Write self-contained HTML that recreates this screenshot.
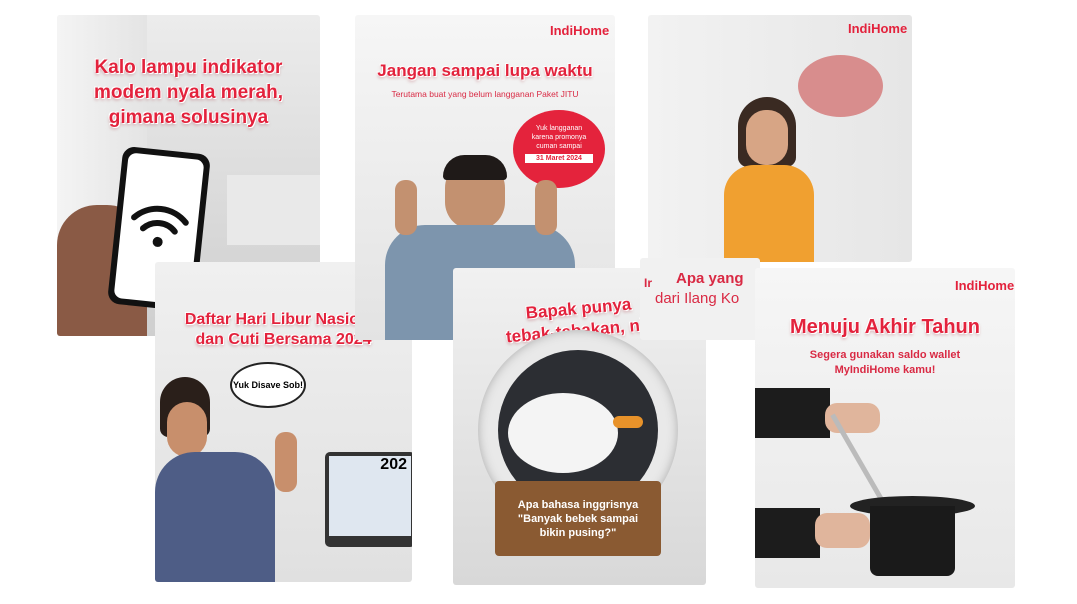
<!DOCTYPE html>
<html><head><meta charset="utf-8"><style>
body{margin:0;width:1077px;height:604px;background:#fff;position:relative;overflow:hidden;font-family:"Liberation Sans",sans-serif}
.c{position:absolute;overflow:hidden;border-radius:3px}
.t{position:absolute;left:0;right:0;text-align:center;color:#e3223c;font-weight:bold;text-shadow:0 0 2px #fff,1px 1px 0 #fff,-1px -1px 0 #fff,0 2px 3px rgba(150,0,20,.35)}
.s{position:absolute;left:0;right:0;text-align:center;color:#d92a44;font-size:10px}
.logo{position:absolute;color:#e3223c;font-weight:bold;font-size:13px}
.a{position:absolute}
</style></head><body>

<!-- card 1 -->
<div class="c" style="left:57px;top:15px;width:263px;height:321px;background:linear-gradient(#ececec,#dadada 60%,#cfcfcf)">
 <div class="a" style="left:0;top:0;width:90px;height:321px;background:linear-gradient(90deg,#f4f4f4,#e4e4e4)"></div>
 <div class="a" style="left:170px;top:160px;width:93px;height:70px;background:#e9e9e9"></div>
 <div class="t" style="top:40px;font-size:19px;line-height:25px">Kalo lampu indikator<br>modem nyala merah,<br>gimana solusinya</div>
 <div class="a" style="left:0;top:190px;width:90px;height:131px;background:#8a5a45;border-radius:40px 40px 0 0"></div>
 <div class="a" style="left:58px;top:135px;width:88px;height:158px;background:#111;border-radius:12px;transform:rotate(6deg)">
  <div style="position:absolute;left:6px;top:6px;right:6px;bottom:6px;background:#fff;border-radius:8px"></div>
  <svg style="position:absolute;left:14px;top:50px" width="60" height="50" viewBox="0 0 60 50"><path d="M4 20 A36 36 0 0 1 56 20" fill="none" stroke="#111" stroke-width="6" stroke-linecap="round"/><path d="M14 30 A22 22 0 0 1 46 30" fill="none" stroke="#111" stroke-width="6" stroke-linecap="round"/><circle cx="30" cy="42" r="5" fill="#111"/></svg>
 </div>
</div>

<!-- card 4 -->
<div class="c" style="left:155px;top:262px;width:257px;height:320px;background:linear-gradient(#f0f0f0,#e0e0e0)">
 <div class="t" style="top:48px;font-size:16px;line-height:20px">Daftar Hari Libur Nasional<br>dan Cuti Bersama 2024</div>
 <div class="a" style="left:75px;top:100px;width:72px;height:42px;background:#fff;border:2px solid #222;border-radius:50%;font-size:9px;font-weight:bold;text-align:center;line-height:42px;white-space:nowrap">Yuk Disave Sob!</div>
 <div class="a" style="left:170px;top:190px;width:90px;height:95px;background:#333;border-radius:5px"><div style="margin:4px;height:80px;background:#dfe7f0;font-weight:bold;font-size:16px;text-align:right;padding-right:4px">202</div></div>
 <div class="a" style="left:5px;top:115px;width:50px;height:60px;background:#2a1f1a;border-radius:30px 30px 10px 10px"></div>
 <div class="a" style="left:12px;top:140px;width:40px;height:55px;background:#c88f6c;border-radius:20px"></div>
 <div class="a" style="left:0;top:190px;width:120px;height:130px;background:#4e5d86;border-radius:40px 40px 0 0"></div>
 <div class="a" style="left:120px;top:170px;width:22px;height:60px;background:#c88f6c;border-radius:10px"></div>
</div>

<!-- card 2 -->
<div class="c" style="left:355px;top:15px;width:260px;height:325px;background:linear-gradient(#f6f6f6,#e3e3e3)">
 <div class="logo" style="left:195px;top:8px">IndiHome</div>
 <div class="t" style="top:46px;font-size:17px">Jangan sampai lupa waktu</div>
 <div class="s" style="top:74px;font-size:8.5px">Terutama buat yang belum langganan Paket JITU</div>
 <div class="a" style="left:158px;top:95px;width:92px;height:78px;background:#e4233c;border-radius:50%;color:#fff;font-size:7px;text-align:center;padding-top:14px;box-sizing:border-box;line-height:9px">Yuk langganan<br>karena promonya<br>cuman sampai<div style="background:#fff;color:#e4233c;margin:3px 12px;font-weight:bold">31 Maret 2024</div></div>
 <div class="a" style="left:90px;top:145px;width:60px;height:70px;background:#c39170;border-radius:28px"></div>
 <div class="a" style="left:88px;top:140px;width:64px;height:25px;background:#1f1a18;border-radius:30px 30px 5px 5px"></div>
 <div class="a" style="left:30px;top:210px;width:190px;height:115px;background:#7d95ad;border-radius:40px 40px 0 0"></div>
 <div class="a" style="left:40px;top:165px;width:22px;height:55px;background:#c39170;border-radius:10px"></div>
 <div class="a" style="left:180px;top:165px;width:22px;height:55px;background:#c39170;border-radius:10px"></div>
</div>

<!-- card 3 -->
<div class="c" style="left:648px;top:15px;width:264px;height:247px;background:linear-gradient(90deg,#f2f2f2,#e6e6e6)">
 <div class="logo" style="left:200px;top:6px">IndiHome</div>
 <div class="a" style="left:150px;top:40px;width:85px;height:62px;background:#d88d8d;border-radius:50%"></div>
 <div class="a" style="left:90px;top:82px;width:58px;height:70px;background:#3a2a22;border-radius:30px 30px 10px 10px"></div>
 <div class="a" style="left:98px;top:95px;width:42px;height:55px;background:#d7a585;border-radius:20px"></div>
 <div class="a" style="left:76px;top:150px;width:90px;height:97px;background:#f0a030;border-radius:30px 30px 0 0"></div>
</div>

<!-- card 5 -->
<div class="c" style="left:453px;top:268px;width:253px;height:317px;background:linear-gradient(#f1f1f1,#d8d8d8)">
 <div class="t" style="top:30px;font-size:17px;line-height:22px;transform:rotate(-5deg)">Bapak punya<br>tebak-tebakan, nih</div>
 <div class="a" style="left:25px;top:62px;width:200px;height:200px;border-radius:50%;background:#e9e9e9;box-shadow:inset 0 0 10px #aaa"></div>
 <div class="a" style="left:45px;top:82px;width:160px;height:160px;border-radius:50%;background:#2c2e33"></div>
 <div class="a" style="left:55px;top:125px;width:110px;height:80px;border-radius:50%;background:#f4f4f4"></div>
 <div class="a" style="left:160px;top:148px;width:30px;height:12px;background:#e8922a;border-radius:6px"></div>
 <div class="a" style="left:42px;top:213px;width:166px;height:75px;background:#8a5a32;border-radius:4px;color:#fff;font-size:11px;font-weight:bold;text-align:center;padding-top:17px;box-sizing:border-box;line-height:14px">Apa bahasa inggrisnya<br>"Banyak bebek sampai<br>bikin pusing?"</div>
</div>

<!-- card 3b (over card5 top) -->
<div class="c" style="left:640px;top:258px;width:120px;height:82px;background:#f1f1f1">
 <div class="a" style="left:4px;top:18px;color:#d92a44;font-size:12px;font-weight:bold">Ir</div>
 <div class="a" style="left:36px;top:12px;color:#d92a44;font-size:15px;font-weight:bold;white-space:nowrap">Apa yang</div>
 <div class="a" style="left:15px;top:32px;color:#d92a44;font-size:15px;white-space:nowrap">dari Ilang Ko</div>
</div>

<!-- card 7 -->
<div class="c" style="left:755px;top:268px;width:260px;height:320px;background:linear-gradient(#f6f6f6,#e8e8e8)">
 <div class="logo" style="left:200px;top:10px">IndiHome</div>
 <div class="t" style="top:48px;font-size:20px">Menuju Akhir Tahun</div>
 <div class="s" style="top:80px;font-size:11px;font-weight:bold;line-height:15px">Segera gunakan saldo wallet<br>MyIndiHome kamu!</div>
 <div class="a" style="left:0;top:120px;width:75px;height:50px;background:#1c1c1c"></div>
 <div class="a" style="left:70px;top:135px;width:55px;height:30px;background:#e0b59c;border-radius:12px"></div>
 <div class="a" style="left:100px;top:140px;width:5px;height:100px;background:#bbb;transform:rotate(-30deg)"></div>
 <div class="a" style="left:0;top:240px;width:65px;height:50px;background:#1c1c1c"></div>
 <div class="a" style="left:60px;top:245px;width:55px;height:35px;background:#e0b59c;border-radius:12px"></div>
 <div class="a" style="left:95px;top:228px;width:125px;height:20px;background:#222;border-radius:50%"></div>
 <div class="a" style="left:115px;top:238px;width:85px;height:70px;background:#1a1a1a;border-radius:0 0 8px 8px"></div>
</div>

</body></html>
